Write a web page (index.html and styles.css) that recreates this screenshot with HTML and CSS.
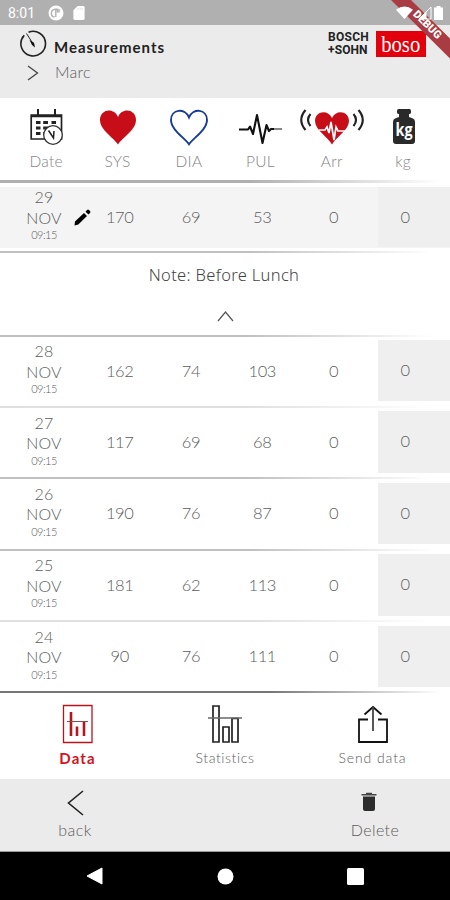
FILE: index.html
```html
<!DOCTYPE html>
<html lang="en">
<head>
<meta charset="utf-8">
<title>Measurements</title>
<link rel="stylesheet" href="styles.css">
</head>
<body>
<div class="app">
  <div class="status">
    <span class="clock">8:01</span>
    <svg class="s-app" width="16" height="16" viewBox="0 0 16 16"><circle cx="8" cy="8" r="7.5" fill="#fff"/><path d="M7 4.300A3.900 3.900 0 0 0 6.500 12M7.800 12V4.300H9.500V7.500" fill="none" stroke="#b0b0b0" stroke-width="1.400"/><path d="M11 4V7.500" stroke="#b0b0b0" stroke-width="1.500"/></svg>
    <svg class="s-sd" width="12" height="14" viewBox="0 0 12 15"><path d="M4.500 0H10.500Q12 0 12 1.500V13.500Q12 15 10.500 15H1.500Q0 15 0 13.500V4.500Z" fill="#fff"/><path d="M5 2v2M7.300 2v2M9.500 2v2" stroke="#ddd"/></svg>
  </div>
  <svg class="ribbon" width="60" height="60" viewBox="0 0 60 60"><path d="M1 0H21L60 38.500V58.500Z" fill="#a93b43"/></svg>
  <div class="signals">
    <svg width="17" height="13" viewBox="0 0 17 13"><path d="M0 3.800Q8.500-3 17 3.800L8.500 13Z" fill="#fff"/></svg>
    <svg width="14" height="14" viewBox="0 0 14 14"><path d="M13 1V13H1Z" fill="none" stroke="#fff"/><path d="M8.500 6V13H1Z" fill="#fff"/></svg>
    <svg width="9" height="14" viewBox="0 0 9 14"><path d="M2.500 1.500V0H6.500V1.500H9V14H0V1.500Z" fill="#fff"/></svg>
  </div>
  <span class="debug">DEBUG</span>

  <header class="header">
    <svg class="gauge" width="28" height="28" viewBox="0 0 28 28" fill="none" stroke="#222" stroke-width="1.600"><path d="M9.500 2.300A12.300 12.300 0 1 1 4 6.800" /><path d="M3.300 8L5.200 5.300"/><path d="M7.500 3.500L14.500 14.500" stroke-width="1"/><path d="M10.500 10L13 15L16 17.500L15 12.800Z" fill="#111" stroke="none"/></svg>
    <h1>Measurements</h1>
    <svg class="chev" width="12" height="16" viewBox="0 0 12 16"><path d="M1 1L10.500 8L1 15" fill="none" stroke="#444" stroke-width="1.300"/></svg>
    <span class="user">Marc</span>
    <div class="brand">
      <div class="bs"><span>BOSCH</span><span>+SOHN</span></div>
      <div class="boso"><span>boso</span></div>
    </div>
  </header>

  <section class="cols">
    <div><svg width="36" height="38" viewBox="0 0 36 38"><path d="M3.200 7.200H33.500V31H3.200ZM3 8.500H33" fill="none" stroke="#222" stroke-width="1.700"/><path d="M10 1V7M27 1V7" stroke="#222" stroke-width="2"/><path d="M8 14.500H12.500M15.200 14.500H20M23.500 14.500H28M8 20H12.500M15.200 20H20M8 25.500H12.500M15.200 25.500H18" stroke="#222" stroke-width="3"/><circle cx="25" cy="27" r="9.300" fill="#fff" stroke="#333" stroke-width="1.300"/><path d="M20.500 22.500L25.500 30L26 23" fill="none" stroke="#222" stroke-width="1.500"/></svg><span>Date</span></div>
    <div><svg width="38" height="38" viewBox="0 0 38 38"><path d="M19 36.500C15 30 1 22 1 12C1 1 15-1 19 9C23-1 37 1 37 12C37 22 23 30 19 36.500Z" fill="#c70d17"/></svg><span>SYS</span></div>
    <div><svg width="38" height="38" viewBox="0 0 38 38"><path d="M19 36.300C15 30 1 22 1 12C1 1 15-.5 19 9.500C23-.5 37 1 37 12C37 22 23 30 19 36.300Z" fill="none" stroke="#173b96" stroke-width="1.900"/></svg><span>DIA</span></div>
    <div><svg width="44" height="38" viewBox="0 0 44 38" fill="none" stroke="#111" stroke-linejoin="round"><path d="M1 21.500H10L12 18.500L15 26L19 7L24.500 35L28.500 17L31 23L33 21H36" stroke-width="2.100"/><path d="M35 21H44" stroke-width="1"/></svg><span>PUL</span></div>
    <div><svg class="arr" width="66" height="38" viewBox="0 0 66 38"><path d="M33 36.500C29 29 16 22 16 13C16 3 29 1 33 10C37 1 50 3 50 13C50 22 37 29 33 36.500Z" fill="#c70d17"/><path d="M20 22H26L28 19L30 25L32 14L35 32L37 19L39 23H46" fill="none" stroke="#fff" stroke-width="1.700"/><path d="M6.500 2Q-2 12 6.500 22M11.500 6Q6.500 12 11.500 18M59.500 2Q68 12 59.500 22M54.500 6Q59.500 12 54.500 18" fill="none" stroke="#222" stroke-width="2.100"/></svg><span>Arr</span></div>
    <div><svg class="weight" width="24" height="38" viewBox="0 0 24 38"><path d="M6.500 1H17.500Q19 1 19 3V4.500Q19 6 17 6V9L21 10.500Q23 11.200 23 14V33Q23 36 20 36H4Q1 36 1 33V14Q1 11.200 3 10.500L7 9V6Q5 6 5 4.500V3Q5 1 6.500 1Z" fill="#2a2a2a"/><text x="12" y="28" text-anchor="middle" textLength="17" lengthAdjust="spacingAndGlyphs" class="kgt">kg</text></svg><span>kg</span></div>
  </section>

  <div class="rule thick"></div>
  <div class="row first"><div class="date"><b>29</b><b>NOV</b><small>09:15</small></div><svg class="pen" width="17" height="17" viewBox="0 0 17 17"><path d="M1 12.500L10 4L13 7L4.300 15.600L.5 16.500ZM11.500 2.700L13 1Q14 0 15 1L16 2Q17 3 16 4L14.400 5.600Z" fill="#000"/></svg><i>170</i><i>69</i><i>53</i><i>0</i><i class="kg">0</i></div>
  <div class="rule"></div>
  <div class="note"><span>Note: Before Lunch</span><svg width="17" height="11" viewBox="0 0 17 11"><path d="M1 10L8.500 1L16 10" fill="none" stroke="#555" stroke-width="1.200"/></svg></div>
  <div class="rule"></div>
  <div class="row"><div class="date"><b>28</b><b>NOV</b><small>09:15</small></div><i>162</i><i>74</i><i>103</i><i>0</i><i class="kg">0</i></div>
  <div class="rule light"></div>
  <div class="row"><div class="date"><b>27</b><b>NOV</b><small>09:15</small></div><i>117</i><i>69</i><i>68</i><i>0</i><i class="kg">0</i></div>
  <div class="rule"></div>
  <div class="row"><div class="date"><b>26</b><b>NOV</b><small>09:15</small></div><i>190</i><i>76</i><i>87</i><i>0</i><i class="kg">0</i></div>
  <div class="rule"></div>
  <div class="row"><div class="date"><b>25</b><b>NOV</b><small>09:15</small></div><i>181</i><i>62</i><i>113</i><i>0</i><i class="kg">0</i></div>
  <div class="rule light"></div>
  <div class="row"><div class="date"><b>24</b><b>NOV</b><small>09:15</small></div><i>90</i><i>76</i><i>111</i><i>0</i><i class="kg">0</i></div>
  <div class="rule dark"></div>

  <nav class="tabs">
    <div class="on"><svg width="32" height="40" viewBox="0 0 32 40" fill="none" stroke="#b8141c"><path d="M1.500 1.500H30V38.500H1.500Z" stroke-width="1.300"/><path d="M9 8V32M15 22.500V32M22 18V32" stroke-width="2.600"/><path d="M5 17.500H26" stroke="#8a4a4c"/></svg><span class="t-data">Data</span></div>
    <div><svg width="36" height="40" viewBox="0 0 36 40" fill="none" stroke="#222" stroke-width="1.700"><path d="M6 2H12V38H6ZM16 23H22V38H16ZM25 14.500H31V38H25Z"/><path d="M1 14H35" stroke="#666" stroke-width="1.400"/></svg><span class="t-stat">Statistics</span></div>
    <div><svg width="32" height="40" viewBox="0 0 32 40" fill="none" stroke="#111" stroke-width="1.800"><path d="M11 15.500H2V38H30V15.500H21"/><path d="M7.500 10.500L16 3L24.500 10.500"/><path d="M16 3V27" stroke="#444"/></svg><span class="t-send">Send data</span></div>
  </nav>

  <footer class="actions">
    <div><svg width="17" height="26" viewBox="0 0 17 26"><path d="M16 1L1.500 13L16 25" fill="none" stroke="#222" stroke-width="1.600"/></svg><span class="t-back">back</span></div>
    <div class="del"><svg width="16" height="20" viewBox="0 0 16 20"><path d="M2 4.500H14V17Q14 19 12 19H4Q2 19 2 17Z" fill="#2c2c2c"/><path d="M.5 2.800H15.500M5 1.500H11" stroke="#444" stroke-width="1.600"/></svg><span class="t-del">Delete</span></div>
  </footer>

  <div class="sys">
    <svg width="17" height="18" viewBox="0 0 17 18"><path d="M16 1V17L1 9Z" fill="#fff" stroke="#fff" stroke-linejoin="round"/></svg>
    <svg width="17" height="17" viewBox="0 0 17 17"><circle cx="8.500" cy="8.500" r="8" fill="#fff"/></svg>
    <svg width="17" height="17" viewBox="0 0 17 17"><rect width="17" height="17" rx="1.500" fill="#fff"/></svg>
  </div>
</div>
</body>
</html>
```
FILE: styles.css
```css
* { box-sizing: border-box; }
body { margin: 0; background: #fff; }
svg { display: block; flex: none; }
.app { position: relative; z-index: 0; width: 450px; height: 900px; overflow: hidden; display: flex; flex-direction: column; font-family: Lato, "Open Sans", sans-serif; font-weight: 300; color: #5c5c5c; }
.app > * { flex: none; }

.status { height: 25px; background: #b0b0b0; display: flex; align-items: center; padding: 1px 0 0 8px; }
.clock { width: 40px; font: 400 14px/16px Roboto, sans-serif; color: #fff; }
.s-app { margin-right: 9px; }
.ribbon { position: absolute; right: 0; top: 0; }
.signals { position: absolute; left: 396px; top: 6px; display: flex; gap: 5px; }
.signals svg:nth-child(3) { margin-left: -3px; }
.debug { position: absolute; left: 405px; top: 19px; width: 44px; text-align: center; font: 900 11px/12px Roboto, sans-serif; color: #fff; transform: rotate(45deg); }

.header { height: 73px; background: #ebebeb; display: grid; grid-template-columns: 35px 274px auto; grid-template-rows: 29px 20px; padding: 4px 0 0 19px; align-items: center; }
.gauge { margin-top: 1px; }
.header h1 { margin: 7px 0 0; font: 700 15px/20px Lato, sans-serif; letter-spacing: 1px; color: #222; }
.chev { grid-area: 2 / 1; margin: 10px 0 0 8px; }
.user { grid-area: 2 / 2; font-size: 16px; line-height: 20px; padding: 8px 0 0 1px; letter-spacing: .3px; }
.brand { grid-area: 1 / 3; display: flex; gap: 5px; align-items: center; }
.bs { width: 43px; font: 700 12px/12px Roboto, sans-serif; color: #222; display: flex; flex-direction: column; gap: 1px; letter-spacing: .3px; }
.bs span { height: 12px; }
.bs span + span { letter-spacing: .1px; }
.boso { width: 50px; height: 26px; background: #e1000b; color: #fff; font: 400 23px/27px "Liberation Serif", serif; text-align: center; }
.boso span { display: inline-block; transform: scaleX(.9); }

.cols { height: 82px; display: grid; grid-template-columns: repeat(6, 71.400px); padding: 10px 0 0 10.500px; }
.cols > div { display: flex; flex-direction: column; align-items: center; }
.cols span { font-size: 15.500px; line-height: 20px; margin-top: 5px; color: #858585; letter-spacing: .3px; }
.arr { margin-left: 1px; }
.weight { margin-left: 2px; }
.kgt { font: 700 17px "Open Sans", sans-serif; fill: #fff; }

.rule { height: 2px; background: linear-gradient(90deg, #c0c0c0 0 55%, #fff 96%); }
.rule.thick { height: 3px; background: linear-gradient(90deg, #b0b0b0 0 55%, #fff 98%); }
.rule.light { background: linear-gradient(90deg, #e0e0e0 0 55%, #fff 96%); }
.rule.dark { background: linear-gradient(90deg, #777 0 60%, #fff 98%); }
.row { height: 69.400px; padding: 3.500px 0 4.500px; display: grid; grid-template-columns: 84px repeat(4, 71.300px) 1fr; align-items: center; position: relative; }
.row.first { height: 68px; }
.row.first i { padding-top: 1px; }
.row.first::before { content: ""; position: absolute; inset: 4px 0 3px; background: #f4f4f4; z-index: -1; }
.date { width: 88px; text-align: center; display: flex; flex-direction: column; margin-top: -4px; }
.date b { font-size: 16px; line-height: 20.500px; font-weight: 300; letter-spacing: .2px; }
.date small { font-size: 11px; line-height: 14px; letter-spacing: -.5px; }
.row i { font-style: normal; font-size: 16.500px; line-height: 20px; text-align: center; letter-spacing: -.4px; }
.row .kg { align-self: stretch; margin-left: 9px; padding: 20px 18px 0 0; background: #efefef; }
.row.first .kg { padding-top: 20px; }
.pen { position: absolute; left: 74px; top: 26px; }
.note { height: 81.500px; display: flex; flex-direction: column; align-items: center; padding-top: 11px; color: #444; font: 400 16.500px/22px "Noto Sans", sans-serif; }
.note svg { margin-top: 25px; }
.note span { font-weight: 300; letter-spacing: .33px; margin-right: 2px; }

.tabs { height: 85.500px; display: grid; grid-template-columns: 147px 1fr 147px; padding: 10.500px 4px 0; }
.tabs > div, .actions > div { display: flex; flex-direction: column; align-items: center; }
.tabs span { font-size: 14px; line-height: 18px; margin-top: 5px; letter-spacing: .6px; }
.tabs .t-send { letter-spacing: .9px; }
.tabs .on span { color: #d2141c; font-weight: 700; font-size: 15px; letter-spacing: 1.100px; }
.actions { height: 73px; background: #ebebeb; border-bottom: 1px solid #999; display: flex; justify-content: space-between; padding: 11px 0 0; }
.actions > div { width: 150px; }
.actions span { font-size: 16px; line-height: 20px; margin-top: 4px; letter-spacing: .4px; }
.actions .del svg { margin: 2px 12px 4px 0; }
.sys { height: 49px; background: #000; display: flex; justify-content: space-between; align-items: center; padding: 0 86px; }
.sys svg:nth-child(2) { margin-left: 1px; }
```
